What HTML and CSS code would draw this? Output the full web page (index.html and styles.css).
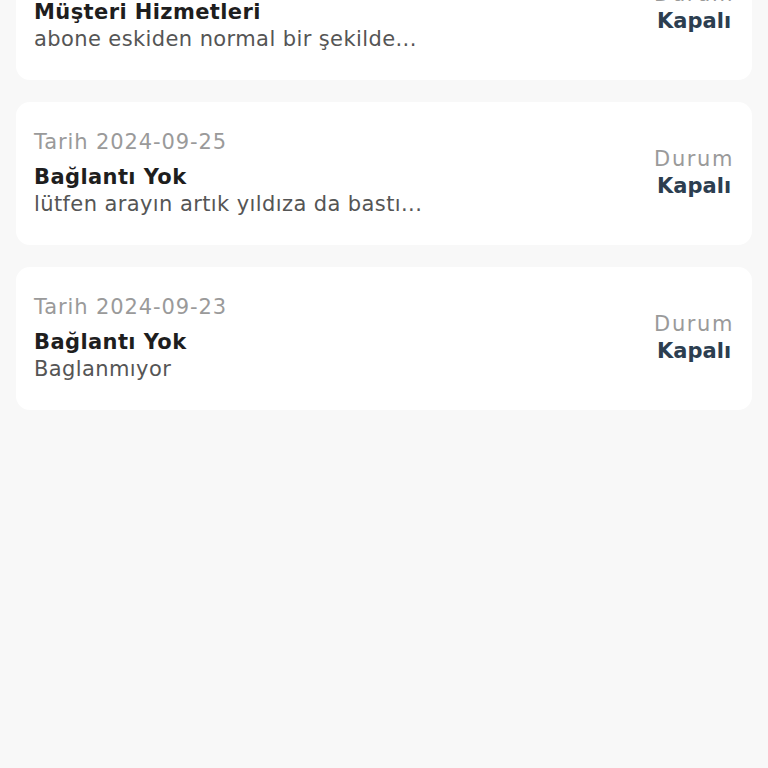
FILE: index.html
```html
<!DOCTYPE html>
<html lang="tr">
<head>
  <meta charset="UTF-8">
  <meta name="viewport" content="width=device-width, initial-scale=1.0">
  <title>Destek Talepleri</title>
  <link rel="stylesheet" href="styles.css">
</head>
<body>
<div class="ticket-list">

  <!-- Talep kartı -->
  <div class="ticket">
    <div class="ticket-info">
      <div class="ticket-date">Tarih 2024-09-27</div>
      <div class="ticket-title">Müşteri Hizmetleri</div>
      <div class="ticket-desc">abone eskiden normal bir şekilde...</div>
    </div>
    <div class="ticket-status">
      <div class="status-label">Durum</div>
      <div class="status-value">Kapalı</div>
    </div>
  </div>

  <div class="ticket">
    <div class="ticket-info">
      <div class="ticket-date">Tarih 2024-09-25</div>
      <div class="ticket-title">Bağlantı Yok</div>
      <div class="ticket-desc">lütfen arayın artık yıldıza da bastı...</div>
    </div>
    <div class="ticket-status">
      <div class="status-label">Durum</div>
      <div class="status-value">Kapalı</div>
    </div>
  </div>

  <div class="ticket">
    <div class="ticket-info">
      <div class="ticket-date">Tarih 2024-09-23</div>
      <div class="ticket-title">Bağlantı Yok</div>
      <div class="ticket-desc">Baglanmıyor</div>
    </div>
    <div class="ticket-status">
      <div class="status-label">Durum</div>
      <div class="status-value">Kapalı</div>
    </div>
  </div>

</div>
</body>
</html>
```

FILE: styles.css
```css
body {
  margin: 0;
  font-family: "DejaVu Sans", sans-serif;
  background-color: #f8f8f8;
}

/* liste sayfası yukarı kaydırılmış halde */
.ticket-list {
  display: flex;
  flex-direction: column;
  gap: 22px;
  padding: 0 16px;
  margin-top: -63px;
}

.ticket {
  display: flex;
  align-items: center;
  justify-content: space-between;
  background-color: #fff;
  border-radius: 14px;
  padding: 26px 18px 27px 18px;
}

.ticket-date {
  font-size: 21px;
  line-height: 28px;
  letter-spacing: 0.9px;
  color: #9a9a9a;
}

.ticket-title {
  margin-top: 8px;
  font-size: 21px;
  line-height: 26px;
  letter-spacing: 0.4px;
  font-weight: 700;
  color: #1e1e1e;
}

.ticket-desc {
  font-size: 21px;
  line-height: 28px;
  letter-spacing: 0.4px;
  color: #555;
}

.ticket-status {
  text-align: center;
  font-size: 21px;
  line-height: 27px;
}

.status-label {
  color: #9a9a9a;
  letter-spacing: 1.6px;
}

.status-value {
  font-weight: 700;
  color: #2c3e50;
}
```
